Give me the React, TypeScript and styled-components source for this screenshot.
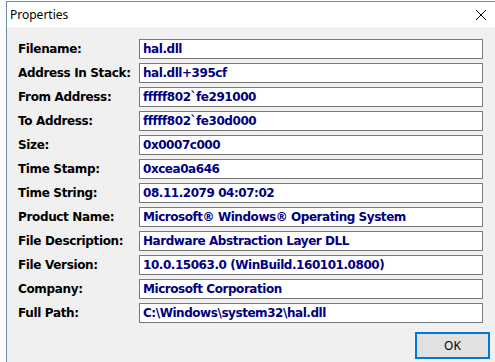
import styled, { createGlobalStyle } from "styled-components";

const GlobalStyle = createGlobalStyle`
  html, body {
    margin: 0;
    padding: 0;
    background: #ffffff;
    overflow: hidden;
  }
  body {
    width: 495px;
    height: 362px;
  }
`;

const Desktop = styled.div`
  width: 495px;
  height: 362px;
  display: flex;
  background: #fbfcfd;
`;

const Window = styled.div`
  margin-left: 6px;
  margin-top: 1px;
  flex: 1;
  display: flex;
  flex-direction: column;
  border-left: 1px solid #6d8fa3;
  border-top: 1px solid #4f93b5;
  background: #f0f0f0;
`;

const TitleBar = styled.div`
  height: 25px;
  background: #ffffff;
  display: flex;
  align-items: center;
  justify-content: space-between;
  padding: 0 8px 0 3px;
`;

const Title = styled.span`
  font-family: "Noto Sans", "Open Sans", sans-serif;
  font-size: 12px;
  color: #000000;
`;

const CloseIcon = styled.svg`
  width: 12px;
  height: 12px;
`;

const Body = styled.div`
  padding: 12px 5px 0 11px;
  display: flex;
  flex-direction: column;
`;

const Grid = styled.div`
  display: grid;
  grid-template-columns: 121px 344px;
  row-gap: 4px;
`;

const Label = styled.div`
  font-family: "DejaVu Sans", "Liberation Sans", sans-serif;
  font-weight: bold;
  font-size: 12px;
  letter-spacing: -0.35px;
  color: #000000;
  height: 20px;
  line-height: 20px;
  white-space: nowrap;
`;

const Field = styled.div`
  box-sizing: border-box;
  height: 20px;
  border: 1px solid #7a7a7a;
  background: #ffffff;
  padding-left: 3px;
  font-family: "DejaVu Sans", "Liberation Sans", sans-serif;
  font-weight: bold;
  font-size: 12px;
  letter-spacing: -0.45px;
  line-height: 18px;
  color: #000080;
  white-space: nowrap;
  overflow: hidden;
`;

const Footer = styled.div`
  display: flex;
  justify-content: flex-end;
  padding-top: 9px;
`;

const Button = styled.button`
  box-sizing: border-box;
  width: 75px;
  height: 27px;
  border: 2px solid #0078d7;
  background: #e1e1e1;
  font-family: "Noto Sans", "Open Sans", sans-serif;
  font-size: 12px;
  color: #000000;
  padding: 0;
`;

const rows: [string, string][] = [
  ["Filename:", "hal.dll"],
  ["Address In Stack:", "hal.dll+395cf"],
  ["From Address:", "fffff802`fe291000"],
  ["To Address:", "fffff802`fe30d000"],
  ["Size:", "0x0007c000"],
  ["Time Stamp:", "0xcea0a646"],
  ["Time String:", "08.11.2079 04:07:02"],
  ["Product Name:", "Microsoft® Windows® Operating System"],
  ["File Description:", "Hardware Abstraction Layer DLL"],
  ["File Version:", "10.0.15063.0 (WinBuild.160101.0800)"],
  ["Company:", "Microsoft Corporation"],
  ["Full Path:", "C:\\Windows\\system32\\hal.dll"],
];

function App() {
  return (
    <>
      <GlobalStyle />
      <Desktop>
        <Window>
          <TitleBar>
            <Title>Properties</Title>
            <CloseIcon viewBox="0 0 12 12">
              <path d="M1 1 L11 11 M11 1 L1 11" stroke="#000" strokeWidth="1" fill="none" />
            </CloseIcon>
          </TitleBar>
          <Body>
            <Grid>
              {rows.flatMap(([label, value]) => [
                <Label key={label}>{label}</Label>,
                <Field key={label + "v"}>{value}</Field>,
              ])}
            </Grid>
            <Footer>
              <Button>OK</Button>
            </Footer>
          </Body>
        </Window>
      </Desktop>
    </>
  );
}

export default App;
